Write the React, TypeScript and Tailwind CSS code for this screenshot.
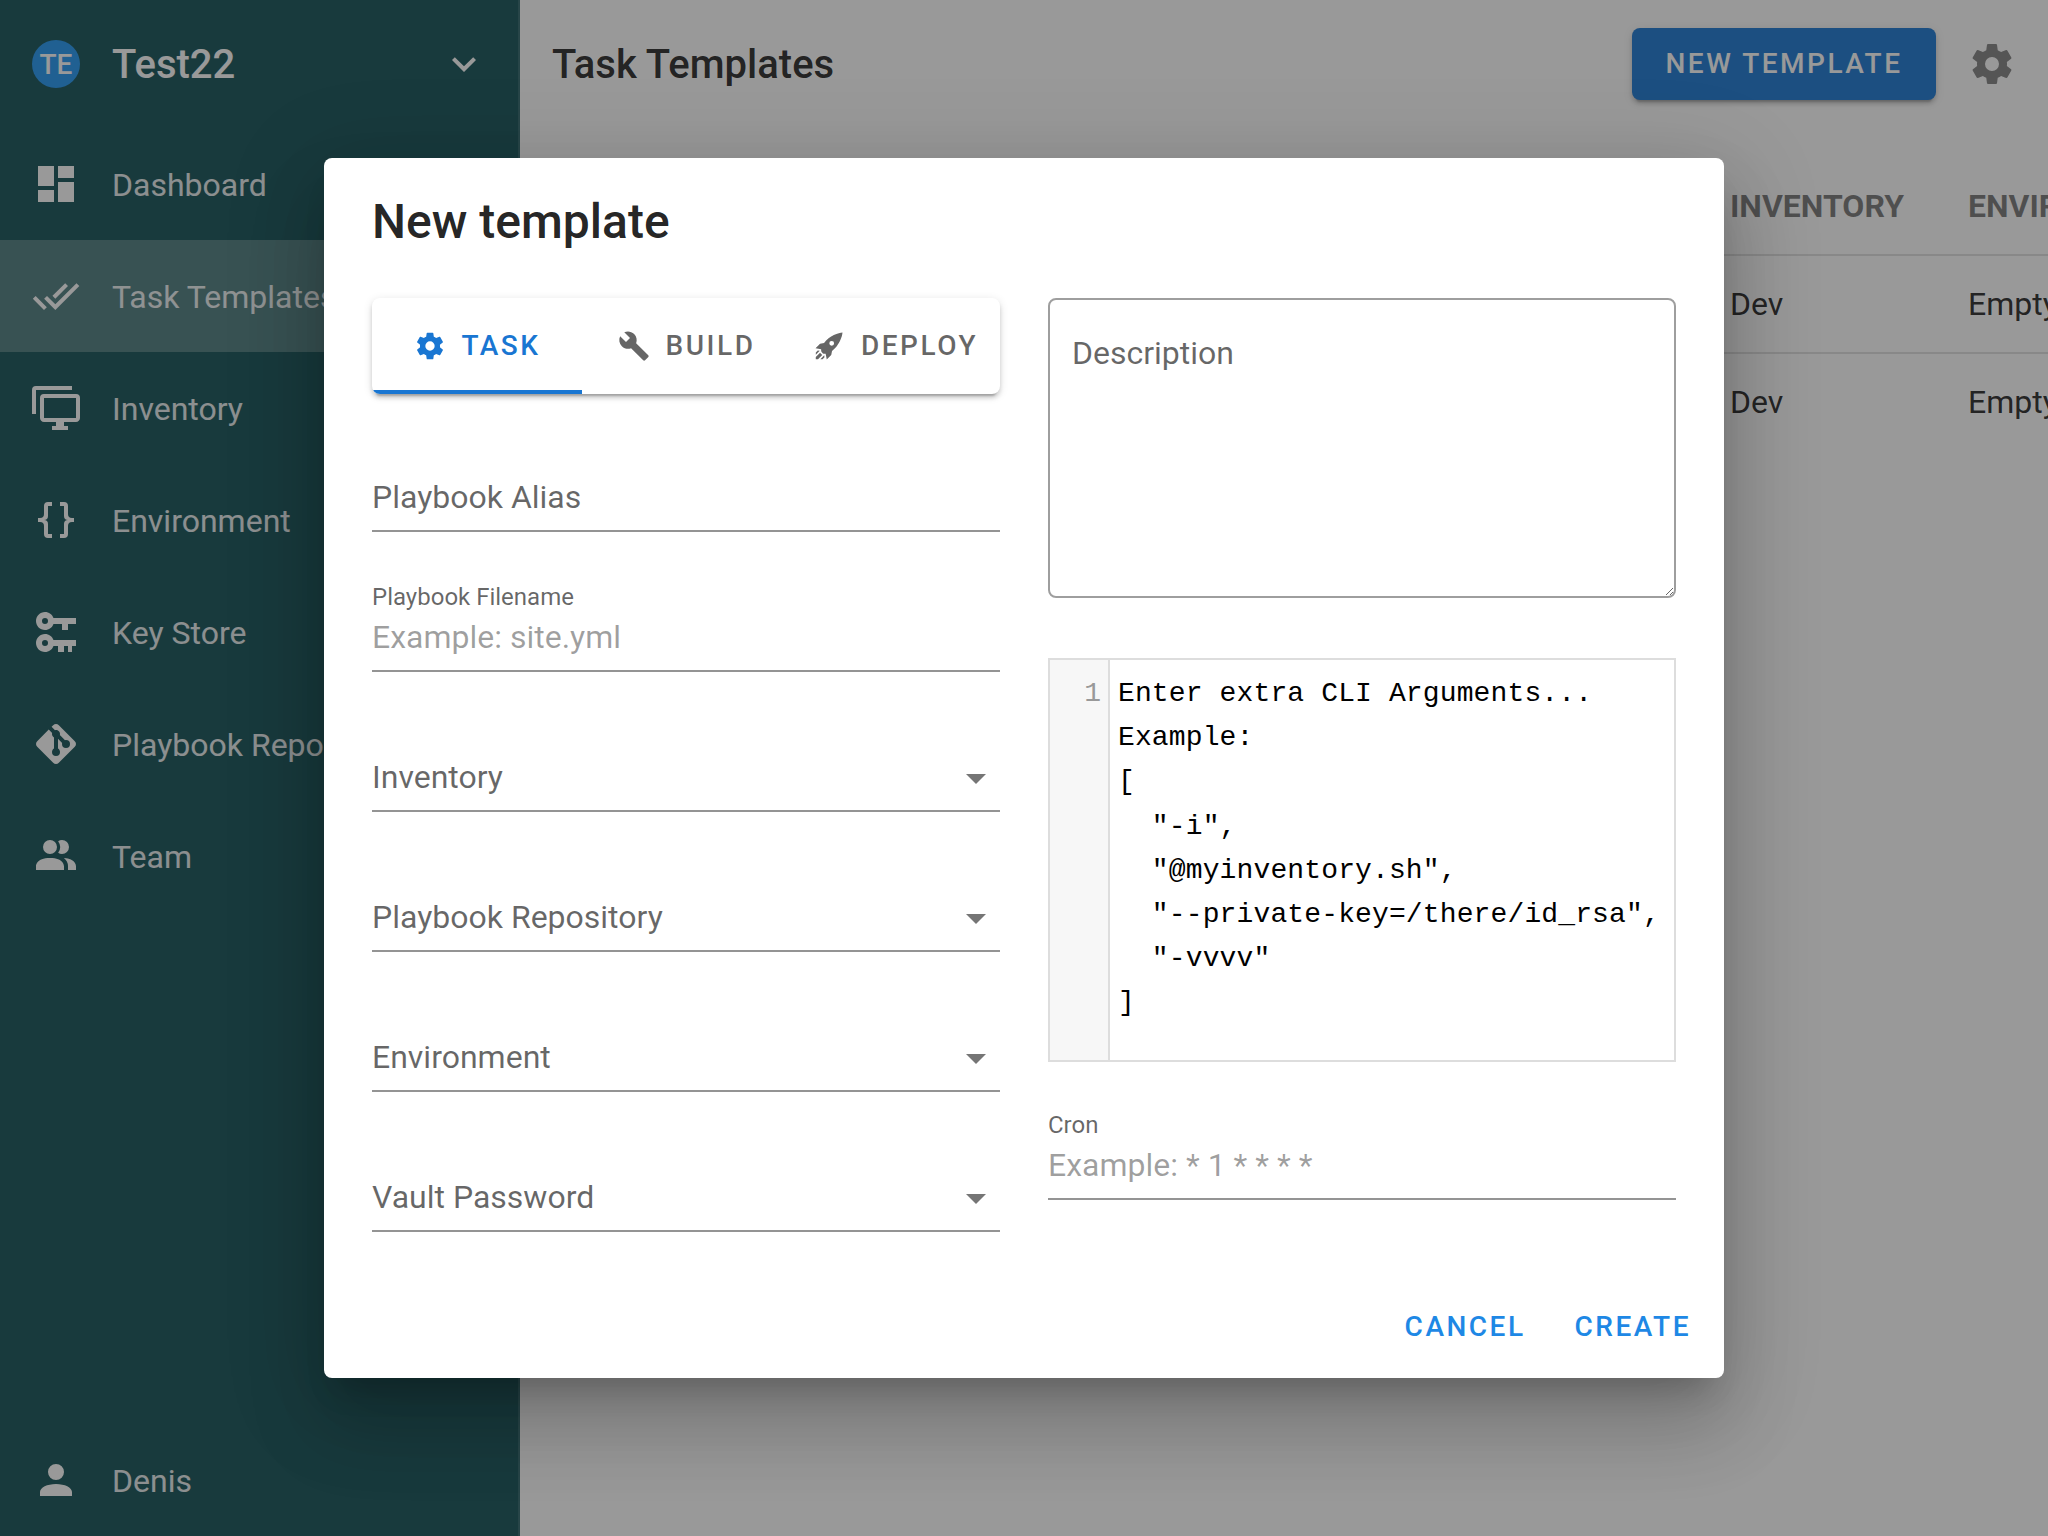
import React from "react";

const P = {
  dashboard: "M13,3V9H21V3M13,21H21V11H13M3,21H11V15H3M3,13H11V3H3V13Z",
  checkAll: "M0.41,13.41L6,19L7.41,17.58L1.83,12M22.24,5.58L11.66,16.17L7.5,12L6.07,13.41L11.66,19L23.66,7M18,7L16.59,5.58L10.24,11.93L11.66,13.34L18,7Z",
  monitor: "M22,17V7H6V17H22M22,5A2,2 0 0,1 24,7V17C24,18.11 23.1,19 22,19H16V21H18V23H10V21H12V19H6C4.89,19 4,18.11 4,17V7A2,2 0 0,1 6,5H22M2,3V15H0V3A2,2 0 0,1 2,1H20V3H2Z",
  braces: "M8,3A2,2 0 0,0 6,5V9A2,2 0 0,1 4,11H3V13H4A2,2 0 0,1 6,15V19A2,2 0 0,0 8,21H10V19H8V14A2,2 0 0,0 6,12A2,2 0 0,0 8,10V5H10V3M16,3A2,2 0 0,1 18,5V9A2,2 0 0,0 20,11H21V13H20A2,2 0 0,0 18,15V19A2,2 0 0,1 16,21H14V19H16V14A2,2 0 0,1 18,12A2,2 0 0,1 16,10V5H14V3H16Z",
  key: "M6.5,2C8.46,2 10.13,3.25 10.74,5H22V8H18V11H15V8H10.74C10.13,9.75 8.46,11 6.5,11C4,11 2,9 2,6.5C2,4 4,2 6.5,2M6.5,5A1.5,1.5 0 0,0 5,6.5A1.5,1.5 0 0,0 6.5,8A1.5,1.5 0 0,0 8,6.5A1.5,1.5 0 0,0 6.5,5M6.5,13C8.46,13 10.13,14.25 10.74,16H22V19H20V22H18V19H16V22H13V19H10.74C10.13,20.75 8.46,22 6.5,22C4,22 2,20 2,17.5C2,15 4,13 6.5,13M6.5,16A1.5,1.5 0 0,0 5,17.5A1.5,1.5 0 0,0 6.5,19A1.5,1.5 0 0,0 8,17.5A1.5,1.5 0 0,0 6.5,16Z",
  git: "M2.6,10.59L8.38,4.8L10.07,6.5C9.83,7.35 10.22,8.28 11,8.73V14.27C10.4,14.61 10,15.26 10,16A2,2 0 0,0 12,18A2,2 0 0,0 14,16C14,15.26 13.6,14.61 13,14.27V9.41L15.07,11.5C15,11.65 15,11.82 15,12A2,2 0 0,0 17,14A2,2 0 0,0 19,12A2,2 0 0,0 17,10C16.82,10 16.65,10 16.5,10.07L13.93,7.5C14.19,6.57 13.71,5.55 12.78,5.16C12.35,5 11.9,4.96 11.5,5.07L9.8,3.38L10.59,2.6C11.37,1.81 12.63,1.81 13.41,2.6L21.4,10.59C22.19,11.37 22.19,12.63 21.4,13.41L13.41,21.4C12.63,22.19 11.37,22.19 10.59,21.4L2.6,13.41C1.81,12.63 1.81,11.37 2.6,10.59Z",
  team: "M16 17V19H2V17S2 13 9 13 16 17 16 17M12.5 7.5A3.5 3.5 0 1 0 9 11A3.5 3.5 0 0 0 12.5 7.5M15.94 13A5.32 5.32 0 0 1 18 17V19H22V17S22 13.37 15.94 13M15 4A3.39 3.39 0 0 0 13.07 4.59A5 5 0 0 1 13.07 10.41A3.39 3.39 0 0 0 15 11A3.5 3.5 0 0 0 15 4Z",
  account: "M12,4A4,4 0 0,1 16,8A4,4 0 0,1 12,12A4,4 0 0,1 8,8A4,4 0 0,1 12,4M12,14C16.42,14 20,15.79 20,18V20H4V18C4,15.79 7.58,14 12,14Z",
  cog: "M12,15.5A3.5,3.5 0 0,1 8.5,12A3.5,3.5 0 0,1 12,8.5A3.5,3.5 0 0,1 15.5,12A3.5,3.5 0 0,1 12,15.5M19.43,12.97C19.47,12.65 19.5,12.33 19.5,12C19.5,11.67 19.47,11.34 19.43,11L21.54,9.37C21.73,9.22 21.78,8.95 21.66,8.73L19.66,5.27C19.54,5.05 19.27,4.96 19.05,5.05L16.56,6.05C16.04,5.66 15.5,5.32 14.87,5.07L14.5,2.42C14.46,2.18 14.25,2 14,2H10C9.75,2 9.54,2.18 9.5,2.42L9.13,5.07C8.5,5.32 7.96,5.66 7.44,6.05L4.95,5.05C4.73,4.96 4.46,5.05 4.34,5.27L2.34,8.73C2.21,8.95 2.27,9.22 2.46,9.37L4.57,11C4.53,11.34 4.5,11.67 4.5,12C4.5,12.33 4.53,12.65 4.57,12.97L2.46,14.63C2.27,14.78 2.21,15.05 2.34,15.27L4.34,18.73C4.46,18.95 4.73,19.03 4.95,18.95L7.44,17.94C7.96,18.34 8.5,18.68 9.13,18.93L9.5,21.58C9.54,21.82 9.75,22 10,22H14C14.25,22 14.46,21.82 14.5,21.58L14.87,18.93C15.5,18.67 16.04,18.34 16.56,17.94L19.05,18.95C19.27,19.03 19.54,18.95 19.66,18.73L21.66,15.27C21.78,15.05 21.73,14.78 21.54,14.63L19.43,12.97Z",
  wrench: "M22.7,19L13.6,9.9C14.5,7.6 14,4.9 12.1,3C10.1,1 7.1,0.6 4.7,1.7L9,6L6,9L1.6,4.7C0.4,7.1 0.9,10.1 2.9,12.1C4.8,14 7.5,14.5 9.8,13.6L18.9,22.7C19.3,23.1 19.9,23.1 20.3,22.7L22.6,20.4C23.1,20 23.1,19.3 22.7,19Z",
  rocket: "M2.81,14.12L5.64,11.29L8.17,10.79C11.39,6.41 17.55,4.22 19.78,4.22C19.78,6.45 17.59,12.61 13.21,15.83L12.71,18.36L9.88,21.19L9.17,17.66C7.76,17.66 7.76,17.66 7.05,16.95C6.34,16.24 6.34,16.24 6.34,14.83L2.81,14.12M5.64,16.95L7.05,18.36L4.39,21.03H2.97V19.61L5.64,16.95M4.22,15.54L5.46,15.71L3,18.16V16.74L4.22,15.54M8.29,18.54L8.46,19.78L7.26,21H5.84L8.29,18.54M13,9.5A1.5,1.5 0 0,0 11.5,11A1.5,1.5 0 0,0 13,12.5A1.5,1.5 0 0,0 14.5,11A1.5,1.5 0 0,0 13,9.5Z",
  chevron: "M7.41,8.58L12,13.17L16.59,8.58L18,10L12,16L6,10L7.41,8.58Z",
  menuDown: "M7,10L12,15L17,10H7Z",
};

function Icon({ d, size, className = "", viewBox = "0 0 24 24" }: { d: string; size: number; className?: string; viewBox?: string }) {
  return (
    <svg viewBox={viewBox} width={size} height={size} fill="currentColor" className={`shrink-0 ${className}`}>
      <path d={d} />
    </svg>
  );
}

const nav = [
  { label: "Dashboard", icon: P.dashboard },
  { label: "Task Templates", icon: P.checkAll, active: true },
  { label: "Inventory", icon: P.monitor },
  { label: "Environment", icon: P.braces },
  { label: "Key Store", icon: P.key },
  { label: "Playbook Repositories", icon: P.git },
  { label: "Team", icon: P.team },
];

function NavRow({ label, icon, active }: { label: string; icon: string; active?: boolean }) {
  return (
    <div className={`flex h-[112px] items-center pl-[32px] text-white ${active ? "bg-white/25" : ""}`}>
      <Icon d={icon} size={48} />
      <span className="ml-[32px] whitespace-nowrap pt-[2px] text-[32px] leading-[48px] opacity-90">{label}</span>
    </div>
  );
}

function TextField({ label, placeholder }: { label?: string; placeholder: string }) {
  return (
    <div className="flex h-[140px] flex-col justify-end">
      {label && <div className="text-[24px] leading-[32px] text-black/60">{label}</div>}
      <div className={`border-b-2 border-black/42 pb-[9px] text-[32px] leading-[48px] ${label ? "text-black/38" : "text-black/60"}`}>
        {placeholder}
      </div>
    </div>
  );
}

function SelectField({ label }: { label: string }) {
  return (
    <div className="flex h-[140px] flex-col justify-end">
      <div className="flex items-center justify-between border-b-2 border-black/42 pb-[9px] text-[32px] leading-[48px] text-black/60">
        <span>{label}</span>
        <Icon d={P.menuDown} size={48} className="translate-y-px text-black/54" />
      </div>
    </div>
  );
}

function Tab({ label, icon, active, viewBox }: { label: string; icon: string; active?: boolean; viewBox?: string }) {
  return (
    <div
      className={`flex h-full items-center justify-center gap-[16px] border-b-4 pt-[4px] text-[28px] font-medium tracking-[2.5px] ${
        active ? "border-[#1976d2] text-[#1976d2]" : "border-transparent text-black/60"
      }`}
    >
      <Icon d={icon} size={32} viewBox={viewBox} />
      <span>{label}</span>
    </div>
  );
}

const code = [
  "Enter extra CLI Arguments...",
  "Example:",
  "[",
  '  "-i",',
  '  "@myinventory.sh",',
  '  "--private-key=/there/id_rsa",',
  '  "-vvvv"',
  "]",
];

export default function App() {
  return (
    <div className="relative h-[1536px] w-[2048px] overflow-hidden bg-white font-['Roboto',sans-serif]">
      <div className="flex h-full">
        <aside className="flex h-full w-[520px] shrink-0 flex-col border-r-2 border-white/12 bg-[#125055]">
          <div className="flex h-[128px] items-center pl-[32px] pr-[30px] text-white">
            <div className="flex h-[48px] w-[48px] items-center justify-center rounded-full bg-[#2196f3] pt-[2px] text-[28px] font-medium">
              TE
            </div>
            <span className="ml-[32px] flex-1 pt-[2px] text-[40px] font-medium leading-[48px]">Test22</span>
            <Icon d={P.chevron} size={48} />
          </div>
          {nav.map((n) => (
            <NavRow key={n.label} {...n} />
          ))}
          <div className="mt-auto">
            <NavRow label="Denis" icon={P.account} />
          </div>
        </aside>

        <main className="flex min-w-0 flex-1 flex-col">
          <header className="flex h-[128px] items-center pl-[32px] pr-[32px]">
            <h1 className="flex-1 pt-[2px] text-[40px] font-medium leading-[48px] text-black/87">Task Templates</h1>
            <button className="flex h-[72px] w-[304px] items-center justify-center rounded-[8px] bg-[#1976d2] text-[28px] font-medium tracking-[2.5px] text-white shadow-[0_6px_2px_-4px_rgba(0,0,0,.2),0_4px_4px_0_rgba(0,0,0,.14),0_2px_10px_0_rgba(0,0,0,.12)]">
              NEW TEMPLATE
            </button>
            <Icon d={P.cog} size={48} className="ml-[32px] text-[#828282]" />
          </header>
          <table className="mt-[30px] w-full table-fixed border-collapse text-left">
            <thead>
              <tr className="h-[97px] border-b-2 border-black/12 text-[32px] font-bold text-black/54">
                <th className="w-[1210px]"></th>
                <th className="w-[238px] font-bold">INVENTORY</th>
                <th className="font-bold whitespace-nowrap">ENVIRONMENT</th>
              </tr>
            </thead>
            <tbody className="text-[32px] text-black/87">
              <tr className="h-[98px] border-b-2 border-black/12">
                <td></td>
                <td>Dev</td>
                <td className="whitespace-nowrap">Empty</td>
              </tr>
              <tr className="h-[96px]">
                <td></td>
                <td>Dev</td>
                <td className="whitespace-nowrap">Empty</td>
              </tr>
            </tbody>
          </table>
        </main>
      </div>

      <div className="absolute inset-0 flex items-center justify-center bg-[#212121]/46">
        <div className="h-[1220px] w-[1400px] rounded-[8px] bg-white px-[48px] shadow-[0_22px_30px_-14px_rgba(0,0,0,.2),0_48px_76px_6px_rgba(0,0,0,.14),0_18px_92px_16px_rgba(0,0,0,.12)]">
          <h2 className="pt-[32px] text-[48px] font-medium leading-[64px] text-black/87">New template</h2>
          <div className="mt-[44px] flex h-[934px] gap-[48px]">
            <div className="w-[628px]">
              <div className="grid h-[96px] grid-cols-[210px_1fr_1fr] overflow-hidden rounded-[8px] bg-white shadow-[0_6px_2px_-4px_rgba(0,0,0,.2),0_4px_4px_0_rgba(0,0,0,.14),0_2px_10px_0_rgba(0,0,0,.12)]">
                <Tab label="TASK" icon={P.cog} active />
                <Tab label="BUILD" icon={P.wrench} />
                <Tab label="DEPLOY" icon={P.rocket} viewBox="1.22 2.63 20.15 20.15" />
              </div>
              <div className="-mt-[2px]">
                <TextField placeholder="Playbook Alias" />
                <TextField label="Playbook Filename" placeholder="Example: site.yml" />
                <SelectField label="Inventory" />
                <SelectField label="Playbook Repository" />
                <SelectField label="Environment" />
                <SelectField label="Vault Password" />
              </div>
            </div>
            <div className="w-[628px]">
              <textarea
                placeholder="Description"
                className="block h-[300px] w-full rounded-[8px] border-2 border-black/38 pl-[22px] pt-[29px] text-[32px] leading-[48px] text-black/87 outline-none placeholder:text-black/60"
              />
              <div className="mt-[60px] flex h-[404px] border-2 border-[#dddddd] bg-white font-['Liberation_Mono',monospace] text-[28px] leading-[44.2px] text-black">
                <div className="w-[60px] shrink-0 border-r-2 border-[#dddddd] bg-[#f7f7f7] pr-[7px] pt-[12px] text-right text-[#999999]">1</div>
                <pre className="pl-[8px] pt-[12px] font-['Liberation_Mono',monospace] tracking-[0.13px]">{code.join("\n")}</pre>
              </div>
              <div className="mt-[47px]">
                <div className="text-[24px] leading-[32px] text-black/60">Cron</div>
                <div className="border-b-2 border-black/42 pb-[9px] text-[32px] leading-[48px] text-black/38">Example: * 1 * * * *</div>
              </div>
            </div>
          </div>
          <div className="-mr-[31px] flex justify-end gap-[17px] pt-[59px] text-[28px] font-medium tracking-[2.5px] text-[#1e88e5]">
            <button className="flex h-[72px] items-center px-[16px]">CANCEL</button>
            <button className="flex h-[72px] items-center px-[16px]">CREATE</button>
          </div>
        </div>
      </div>
    </div>
  );
}
